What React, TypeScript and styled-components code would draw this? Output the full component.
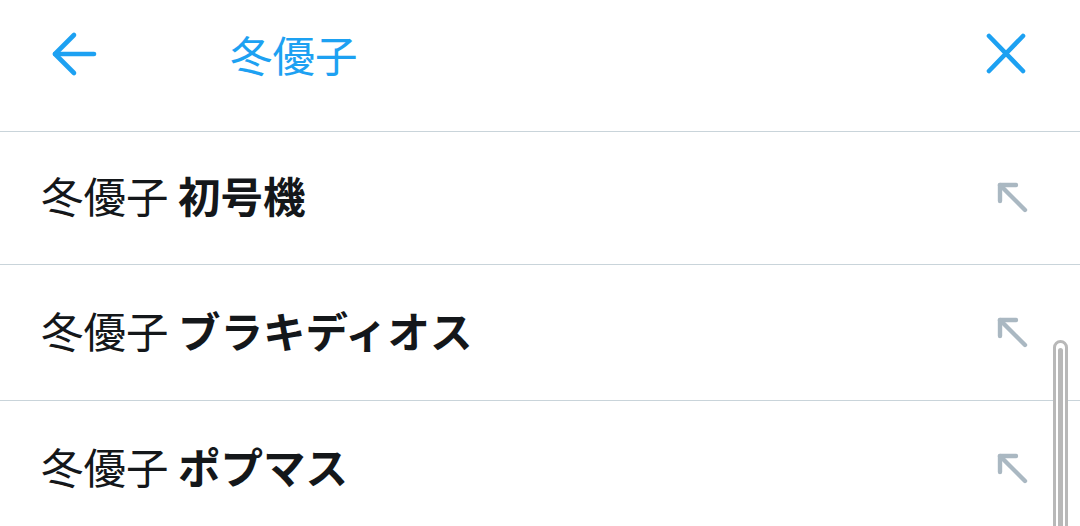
import React from "react";
import styled, { createGlobalStyle } from "styled-components";

const Global = createGlobalStyle`
  html, body { margin: 0; padding: 0; background: #ffffff; overflow: hidden; }
  body { font-family: "Noto Sans CJK JP", "Noto Sans", sans-serif; }
`;

const Page = styled.div`
  position: relative;
  width: 1080px;
  height: 526px;
  overflow: hidden;
  background: #fff;
`;

const Header = styled.header`
  height: 132px;
  box-sizing: border-box;
  padding: 29px 49px 0 49px;
  border-bottom: 1px solid #c9d4da;
`;

const Bar = styled.div`
  display: flex;
  align-items: center;
  height: 50px;
`;

const IconButton = styled.button`
  display: flex;
  align-items: center;
  justify-content: center;
  width: 50px;
  height: 50px;
  padding: 0;
  border: none;
  background: transparent;
  color: #1da1f2;
`;

const Title = styled.div`
  flex: 1;
  margin-left: 131px;
  font-size: 42.5px;
  line-height: 50px;
  color: #1da1f2;
`;

const List = styled.ul`
  list-style: none;
  margin: 0;
  padding: 0;
`;

const Row = styled.li<{ $h: number }>`
  display: flex;
  align-items: center;
  height: ${(p) => p.$h}px;
  box-sizing: border-box;
  padding: 0 50px 0 41px;
  border-bottom: 1px solid #c9d4da;
`;

const Text = styled.div`
  flex: 1;
  margin-bottom: 6px;
  font-size: 42.5px;
  line-height: 50px;
  color: #14171a;
  white-space: pre;
`;

const Bold = styled.span`
  font-weight: 700;
`;

const Fill = styled.svg`
  display: block;
`;

const Scroll = styled.div`
  position: absolute;
  left: 1053px;
  top: 340px;
  width: 15px;
  height: 220px;
  box-sizing: border-box;
  border: 3px solid #b8b8b8;
  border-radius: 8px;
  background: #fff;
  display: flex;
  justify-content: center;
  padding-top: 5px;
`;

const Thumb = styled.div`
  width: 5px;
  height: 100%;
  background: #b8b8b8;
  border-radius: 3px;
`;

const BackIcon = () => (
  <Fill width="50" height="50" viewBox="0 0 50 50" fill="none" stroke="currentColor" strokeWidth="4.6" strokeLinecap="round" strokeLinejoin="round">
    <path d="M6 25 H45" />
    <path d="M25 6 L6 25 L25 44" />
  </Fill>
);

const CloseIcon = () => (
  <Fill width="50" height="50" viewBox="0 0 50 50" fill="none" stroke="currentColor" strokeWidth="4.6" strokeLinecap="round">
    <path d="M8 7 L42 42" />
    <path d="M42 7 L8 42" />
  </Fill>
);

const UpLeft = () => (
  <Fill width="36" height="36" viewBox="0 0 36 36" fill="none" stroke="#aab8c2" strokeWidth="4.4" strokeLinecap="round" strokeLinejoin="round">
    <path d="M6 21 V5 H22" />
    <path d="M6 5 L31 30" />
  </Fill>
);

const items = [
  { rest: "初号機", h: 133 },
  { rest: "ブラキディオス", h: 136 },
  { rest: "ポプマス", h: 136 },
];

export default function App() {
  return (
    <Page>
      <Global />
      <Header>
        <Bar>
          <IconButton aria-label="戻る">
            <BackIcon />
          </IconButton>
          <Title>冬優子</Title>
          <IconButton aria-label="閉じる">
            <CloseIcon />
          </IconButton>
        </Bar>
      </Header>
      <List>
        {items.map((it) => (
          <Row key={it.rest} $h={it.h}>
            <Text>
              {"冬優子 "}
              <Bold>{it.rest}</Bold>
            </Text>
            <UpLeft />
          </Row>
        ))}
      </List>
      <Scroll>
        <Thumb />
      </Scroll>
    </Page>
  );
}
